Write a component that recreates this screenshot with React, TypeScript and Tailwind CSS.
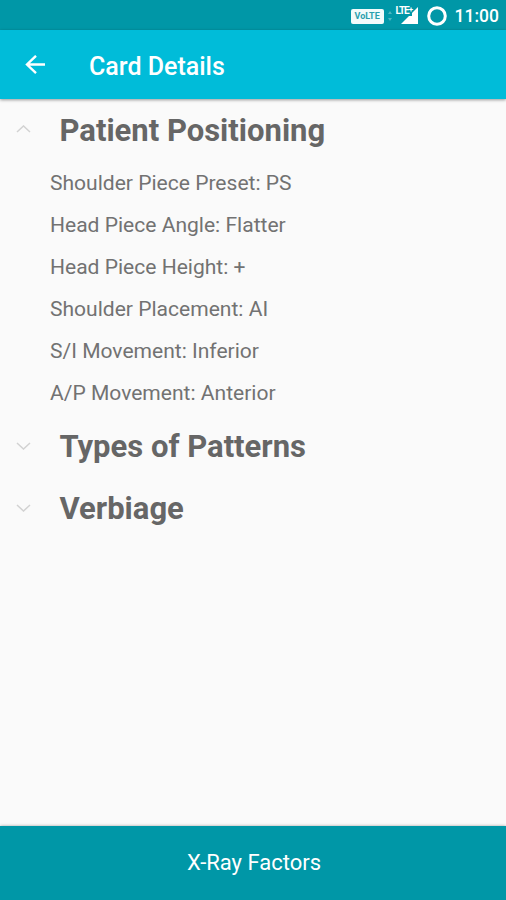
import { useState } from "react";

const sections = [
  {
    title: "Patient Positioning",
    items: [
      "Shoulder Piece Preset: PS",
      "Head Piece Angle: Flatter",
      "Head Piece Height: +",
      "Shoulder Placement: AI",
      "S/I Movement: Inferior",
      "A/P Movement: Anterior",
    ],
  },
  { title: "Types of Patterns", items: [] },
  { title: "Verbiage", items: [] },
];

function StatusBar() {
  return (
    <div className="flex h-[30px] shrink-0 items-center justify-end bg-[#0097a7] pr-[7px] text-white">
      <div className="mr-1 mt-0.5 flex h-[15px] w-[33px] items-center justify-center rounded-[2px] bg-[#f2fbfb] text-[9px] font-bold leading-none text-[#2a9fae]">
        VoLTE
      </div>
      {/* data arrows */}
      <svg className="mr-1 mt-px h-3 w-1" viewBox="0 0 4 12" fill="#4db6c0">
        <path d="M0 4 2 1l2 3zM0 8l2 3 2-3z" />
      </svg>
      {/* signal */}
      <div className="relative mr-[9px] h-[19px] w-[22px]">
        <svg className="h-full w-full" viewBox="0 0 22 19" fill="#fff">
          <path d="M22 1v17H5z" />
        </svg>
        <span className="absolute left-0 top-0 flex bg-[#0097a7] text-[10px] font-bold leading-[10px] tracking-[-1px]">
          LTE<span className="-mt-px text-[8px]">+</span>
        </span>
      </div>
      <svg className="mr-[8px] mt-px h-5 w-5" viewBox="0 0 20 20" fill="none">
        <circle cx="10" cy="10" r="8.300" stroke="#fff" strokeWidth="3" />
      </svg>
      <span className="pt-[3px] text-[17.500px] font-medium leading-none">
        11:00
      </span>
    </div>
  );
}

function Chevron({ open }: { open: boolean }) {
  return (
    <svg
      className={open ? "-mt-[3px] h-2 w-4" : "h-2 w-4"}
      viewBox="0 0 16 8"
      fill="none"
      stroke="#d2d2d2"
      strokeWidth="1.500"
    >
      <path d={open ? "M1 7 7.500 1 14 7" : "M1 1l6.500 6L14 1"} />
    </svg>
  );
}

export default function App() {
  const [open, setOpen] = useState([true, false, false]);

  const toggle = (index: number) =>
    setOpen(open.map((value, i) => (i === index ? !value : value)));

  return (
    <div className="flex h-[900px] w-[506px] flex-col overflow-hidden bg-[#fafafa] font-['Roboto',sans-serif]">
      <StatusBar />

      <header className="z-10 flex h-[69px] shrink-0 items-center bg-[#00bcd9] pl-[25px] pt-px text-white shadow-[0_1px_3px_rgba(0,0,0,0.4)]">
        <button aria-label="Back">
          <svg
            className="h-5 w-5"
            viewBox="0 0 20 20"
            fill="none"
            stroke="#fff"
            strokeWidth="2.400"
          >
            <path d="M20 9.500H2M11 .8 2 9.500l9 8.700" />
          </svg>
        </button>
        <h1 className="ml-[44px] pt-0.5 text-[25px] font-medium leading-none">
          Card Details
        </h1>
      </header>

      <main className="flex-1">
        {sections.map((section, index) => (
          <section key={section.title}>
            <button
              className="flex h-[62.500px] w-full items-center pl-4 text-left"
              onClick={() => toggle(index)}
            >
              <Chevron open={open[index]} />
              <h2 className="ml-[27.500px] pt-px text-[31px] font-bold leading-none text-[#666]">
                {section.title}
              </h2>
            </button>
            {open[index] && (
              <ul className="pl-[50px] text-[21.050px] text-[#727272]">
                {section.items.map((item) => (
                  <li key={item} className="h-[42.200px] leading-[42.200px]">
                    {item}
                  </li>
                ))}
              </ul>
            )}
          </section>
        ))}
      </main>

      <footer className="flex h-[74px] shrink-0 items-center justify-center bg-[#0097a7] pl-0.5 shadow-[0_0_3px_rgba(0,0,0,0.35)]">
        <button className="text-[22px] leading-none text-white">
          X-Ray Factors
        </button>
      </footer>
    </div>
  );
}
